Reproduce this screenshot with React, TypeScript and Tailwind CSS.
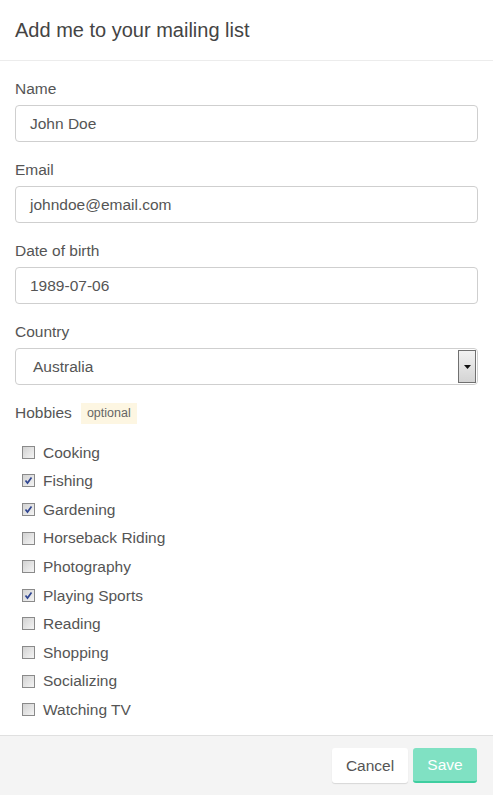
import React from "react";

const FONT = { fontFamily: '"Liberation Sans", Arial, sans-serif' };

const HOBBIES: [string, boolean][] = [
  ["Cooking", false],
  ["Fishing", true],
  ["Gardening", true],
  ["Horseback Riding", false],
  ["Photography", false],
  ["Playing Sports", true],
  ["Reading", false],
  ["Shopping", false],
  ["Socializing", false],
  ["Watching TV", false],
];

function Field({ label, value, top }: { label: string; value: string; top?: boolean }) {
  return (
    <div className={top ? "" : "mt-[18px]"}>
      <div className="h-5 text-[15.5px] leading-5 text-[#555]">{label}</div>
      <div className="mt-[6px] flex h-[37px] items-center rounded-[4px] border border-[#cfcfcf] px-[14px] text-[15.5px] text-[#555]">
        {value}
      </div>
    </div>
  );
}

function Box({ checked }: { checked: boolean }) {
  return (
    <span className="relative flex h-[13px] w-[13px] flex-none items-center justify-center border border-[#8a8a8a] bg-gradient-to-br from-[#d2d2d2] to-[#f4f4f4]">
      {checked && (
        <svg viewBox="0 0 11 11" className="h-[11px] w-[11px]">
          <path d="M2.5 5.5 L4.5 8 L8.5 2.5" fill="none" stroke="#2f4591" strokeWidth="1.7" />
        </svg>
      )}
    </span>
  );
}

export default function App() {
  return (
    <div className="flex h-[795px] w-[493px] flex-col bg-white" style={FONT}>
      <div className="flex h-[61px] flex-none items-center border-b border-[#ececec] px-[15px] pb-[1px] text-[20px] text-[#444]">
        Add me to your mailing list
      </div>

      <div className="flex-1 px-[15px] pt-[18px]">
        <Field label="Name" value="John Doe" top />
        <Field label="Email" value="johndoe@email.com" />
        <Field label="Date of birth" value="1989-07-06" />

        <div className="mt-[18px]">
          <div className="h-5 text-[15.5px] leading-5 text-[#555]">Country</div>
          <div className="mt-[6px] flex h-[37px] items-stretch rounded-[4px] border border-[#cfcfcf] text-[15.5px] text-[#555]">
            <div className="flex flex-1 items-center pl-[17px]">Australia</div>
            <div className="my-[1px] mr-[1px] flex w-[18px] items-center justify-center border border-[#707070] bg-gradient-to-b from-[#f2f2f2] to-[#d4d4d4]">
              <svg viewBox="0 0 7 4" className="h-[4px] w-[7px]">
                <path d="M0 0 H7 L3.5 4 Z" fill="#111" />
              </svg>
            </div>
          </div>
        </div>

        <div className="mt-[18px] flex h-5 items-center gap-[9px] text-[15.5px] text-[#555]">
          <span>Hobbies</span>
          <span className="flex h-[21px] items-center bg-[#fdf6e2] px-[6px] text-[12.5px] text-[#666]">optional</span>
        </div>

        <div className="mt-[15px] flex flex-col pl-[7px]">
          {HOBBIES.map(([name, on]) => (
            <label key={name} className="flex h-[28.6px] items-center gap-[8px] text-[15.5px] text-[#555]">
              <Box checked={on} />
              <span>{name}</span>
            </label>
          ))}
        </div>
      </div>

      <div className="flex h-[60px] flex-none items-start justify-end gap-[5px] border-t border-[#e0e0e0] bg-[#f4f4f4] px-[16px] pt-[12px]">
        <button className="h-[35px] w-[76px] rounded-[3px] bg-white text-[15.5px] text-[#555] shadow-[0_1px_1px_rgba(0,0,0,0.12)]">
          Cancel
        </button>
        <button className="h-[35px] w-[64px] rounded-[3px] border-b-2 border-[#3fcea0] bg-[#80e1c3] text-[15.5px] text-white">
          Save
        </button>
      </div>
    </div>
  );
}
